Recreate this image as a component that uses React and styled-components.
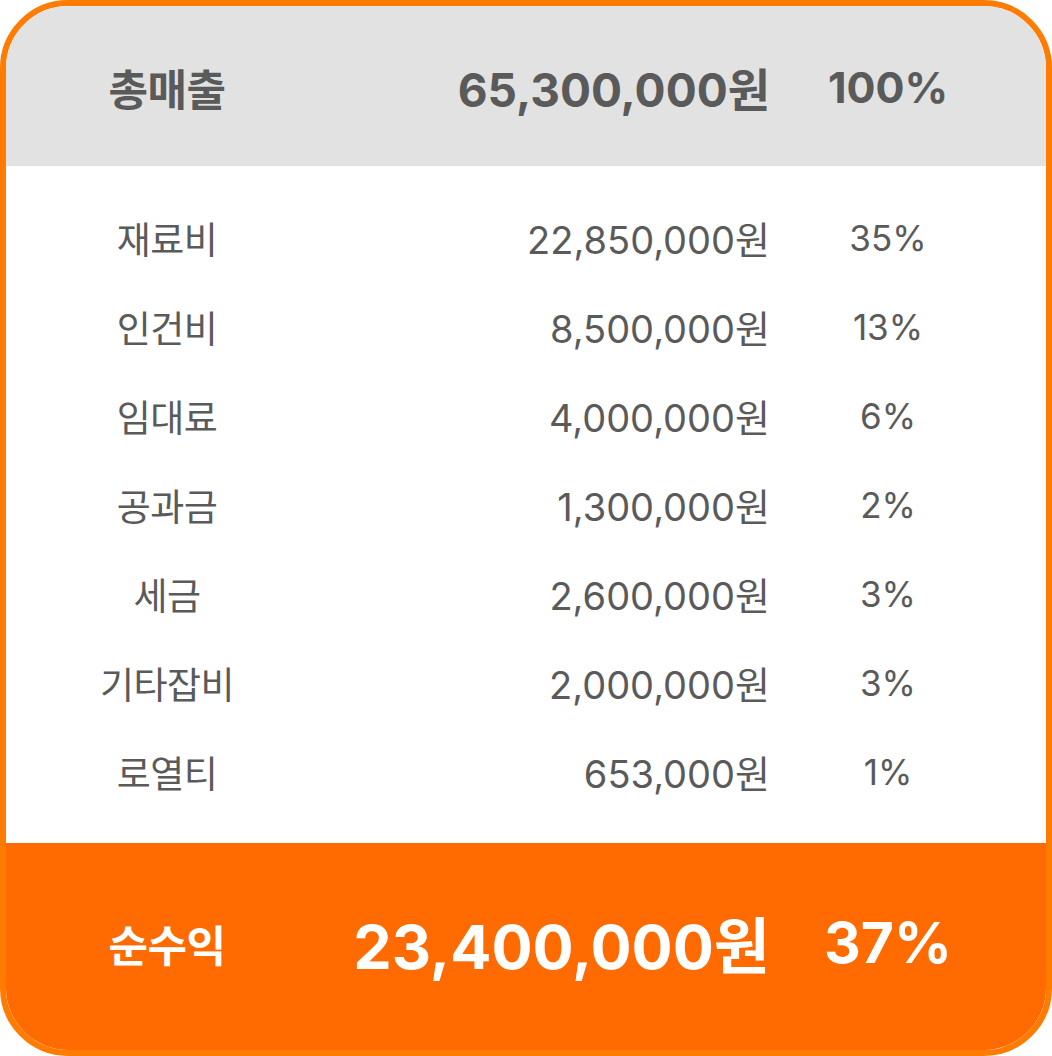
import React from "react";
import styled, { createGlobalStyle } from "styled-components";

const GlobalStyle = createGlobalStyle`
  html, body {
    margin: 0;
    padding: 0;
    background: #ffffff;
  }
  body {
    font-family: Inter, "Noto Sans CJK KR", sans-serif;
  }
`;

const Card = styled.div`
  box-sizing: border-box;
  width: 1052px;
  height: 1056px;
  border: 6px solid #ff7c00;
  border-radius: 68px;
  overflow: hidden;
  display: flex;
  flex-direction: column;
  background: #ffffff;
`;

const Row = styled.div`
  display: grid;
  grid-template-columns: 322px 442px 236px 1fr;
  align-items: center;
  height: ${props => props.height}px;
  color: ${props => props.color || "#5a5a5a"};
  font-weight: ${props => props.weight || 400};
`;

const Header = styled(Row)`
  background: #e2e2e2;
  padding-top: 2px;
  box-sizing: border-box;
`;

const Body = styled.div`
  flex: 1;
  padding: 27px 0;
  display: flex;
  flex-direction: column;
  background: #ffffff;
`;

const Footer = styled(Row)`
  flex: 1;
  background: #ff6b00;
  padding-bottom: 8px;
  box-sizing: border-box;
`;

const Label = styled.div`
  text-align: center;
  font-size: ${props => props.size}px;
  letter-spacing: -0.5px;
`;

const Amount = styled.div`
  text-align: right;
  font-size: ${props => props.size}px;
  white-space: nowrap;
`;

const Percent = styled.div`
  text-align: center;
  font-size: ${props => props.size}px;
  white-space: nowrap;
`;

const items = [
  ["재료비", "22,850,000원", "35%"],
  ["인건비", "8,500,000원", "13%"],
  ["임대료", "4,000,000원", "6%"],
  ["공과금", "1,300,000원", "2%"],
  ["세금", "2,600,000원", "3%"],
  ["기타잡비", "2,000,000원", "3%"],
  ["로열티", "653,000원", "1%"],
];

export default function App() {
  return (
    <>
      <GlobalStyle />
      <Card>
        <Header height={160} weight={700}>
          <Label size={43}>총매출</Label>
          <Amount size={46}>65,300,000원</Amount>
          <Percent size={43}>100%</Percent>
        </Header>
        <Body>
          {items.map(([name, amount, pct]) => (
            <Row key={name} height={89}>
              <Label size={37}>{name}</Label>
              <Amount size={38}>{amount}</Amount>
              <Percent size={35}>{pct}</Percent>
            </Row>
          ))}
        </Body>
        <Footer color="#ffffff" weight={700}>
          <Label size={43}>순수익</Label>
          <Amount size={61}>23,400,000원</Amount>
          <Percent size={57}>37%</Percent>
        </Footer>
      </Card>
    </>
  );
}
